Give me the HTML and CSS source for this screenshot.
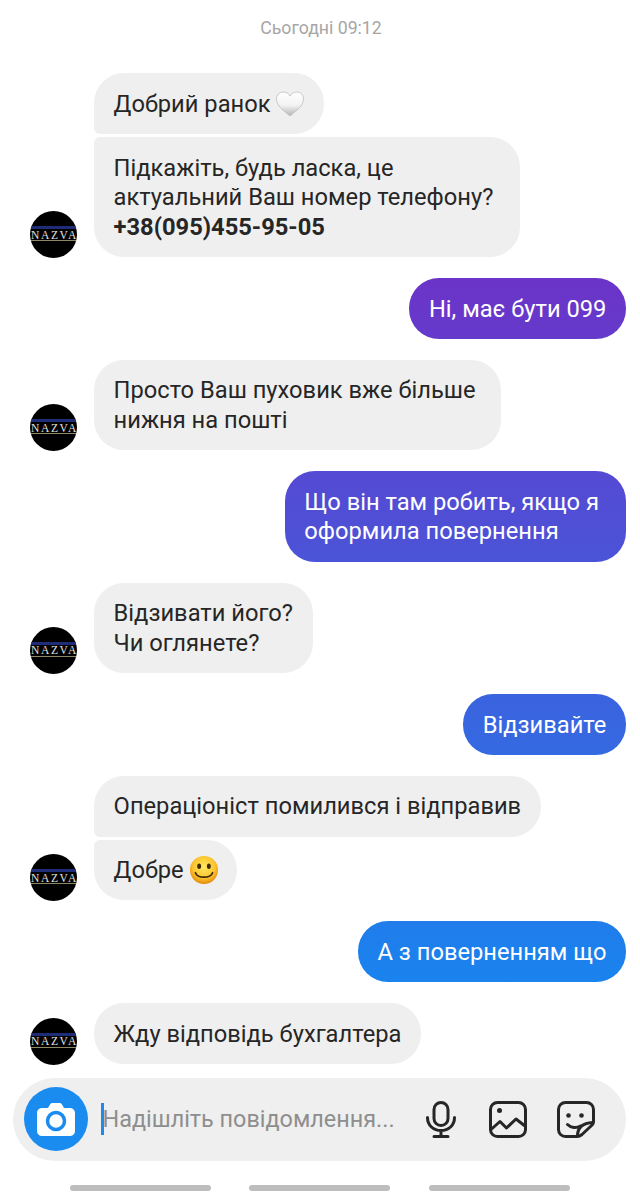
FILE: index.html
```html
<!DOCTYPE html>
<html lang="uk">
<head>
    <meta charset="UTF-8">
    <meta name="viewport" content="width=device-width, initial-scale=1.0">
    <title>Чат</title>
    <link rel="stylesheet" href="styles.css">
</head>
<body>

    <div class="date">Сьогодні 09:12</div>

    <div class="thread">

        <div class="row">
            <div class="avatar"><span class="avatar-name">NAZVA</span></div>
            <div class="group">
                <div class="bubble first">Добрий ранок
                    <svg class="emoji" viewBox="1 2 28 26">
                        <defs>
                            <linearGradient id="heartFill" x1="0" y1="0" x2="0" y2="1">
                                <stop offset="0" stop-color="#ffffff"/>
                                <stop offset="0.55" stop-color="#f3f3f3"/>
                                <stop offset="1" stop-color="#b4b4b4"/>
                            </linearGradient>
                        </defs>
                        <path d="M15 27C9 22 1.500 17 1.500 9.800 1.500 5.500 4.800 3 8.300 3 11 3 13.600 4.400 15 7 16.400 4.400 19 3 21.700 3 25.200 3 28.500 5.500 28.500 9.800 28.500 17 21 22 15 27Z" fill="url(#heartFill)" stroke="#bcbcbc" stroke-width="0.8"/>
                    </svg>
                </div>
                <div class="bubble last pad-wide">Підкажіть, будь ласка, це<br>актуальний Ваш номер телефону?<br><strong>+38(095)455-95-05</strong></div>
            </div>
        </div>

        <div class="bubble sent">Ні, має бути 099</div>

        <div class="row">
            <div class="avatar"><span class="avatar-name">NAZVA</span></div>
            <div class="bubble pad-mid">Просто Ваш пуховик вже більше<br>нижня на пошті</div>
        </div>

        <div class="bubble sent pad-wide">Що він там робить, якщо я<br>оформила повернення</div>

        <div class="row">
            <div class="avatar"><span class="avatar-name">NAZVA</span></div>
            <div class="bubble">Відзивати його?<br>Чи оглянете?</div>
        </div>

        <div class="bubble sent">Відзивайте</div>

        <div class="row">
            <div class="avatar"><span class="avatar-name">NAZVA</span></div>
            <div class="group">
                <div class="bubble first">Операціоніст помилився і відправив</div>
                <div class="bubble last">Добре
                    <svg class="emoji" viewBox="2 2 26 26">
                        <defs>
                            <radialGradient id="faceFill" cx="0.5" cy="0.4" r="0.6">
                                <stop offset="0" stop-color="#ffe760"/>
                                <stop offset="0.65" stop-color="#fcc52f"/>
                                <stop offset="1" stop-color="#e58a0a"/>
                            </radialGradient>
                        </defs>
                        <circle cx="15" cy="15" r="13" fill="url(#faceFill)"/>
                        <ellipse cx="10.500" cy="11.500" rx="1.800" ry="2.600" fill="#3f2a08"/>
                        <ellipse cx="19.500" cy="11.500" rx="1.800" ry="2.600" fill="#3f2a08"/>
                        <path d="M7 17.500C9 23 21 23 23 17.500" fill="none" stroke="#3f2a08" stroke-width="1.600" stroke-linecap="round"/>
                    </svg>
                </div>
            </div>
        </div>

        <div class="bubble sent">А з поверненням що</div>

        <div class="row">
            <div class="avatar"><span class="avatar-name">NAZVA</span></div>
            <div class="bubble">Жду відповідь бухгалтера</div>
        </div>

    </div>

    <div class="composer">
        <div class="camera">
            <svg viewBox="0 0 38 33" width="38" height="33">
                <path d="M5 5H11L13 1.500C13.500 .6 14.200 0 15.400 0H22.600C23.800 0 24.500 .6 25 1.500L27 5H33C35.800 5 38 7.200 38 10V28C38 30.800 35.800 33 33 33H5C2.200 33 0 30.800 0 28V10C0 7.200 2.200 5 5 5Z" fill="#fff"/>
                <circle cx="19" cy="18" r="8.500" fill="none" stroke="#1a8cf0" stroke-width="3.500"/>
            </svg>
        </div>
        <div class="caret"></div>
        <div class="placeholder">Надішліть повідомлення...</div>
        <div class="tools">
            <svg class="tool mic" viewBox="0 0 30 37" width="30" height="37">
                <rect x="8" y="1.500" width="14" height="23" rx="7"/>
                <path d="M1.500 16.500C1.500 24.500 7.500 29.500 15 29.500S28.500 24.500 28.500 16.500M15 29.500V35.500M8 35.500H22"/>
            </svg>
            <svg class="tool" viewBox="0 0 38 37" width="38" height="37">
                <rect x="1.500" y="1.500" width="35" height="34" rx="7"/>
                <path d="M2 28.500L11 20.500 17.500 27 27 18 36 25"/>
                <circle class="dot" cx="10.500" cy="9.500" r="2.500"/>
            </svg>
            <svg class="tool" viewBox="0 0 38 37" width="38" height="37">
                <path d="M36.500 21V8.500C36.500 4.600 33.400 1.500 29.500 1.500H8.500C4.600 1.500 1.500 4.600 1.500 8.500V28.500C1.500 32.400 4.600 35.500 8.500 35.500H20C22 35.500 23.500 34.800 25 33.500L33.500 25.500C35.500 23.800 36.500 23 36.500 21Z"/>
                <path d="M20.500 35C20.500 27 24.500 22 36 21.500M10.500 23.500C14 27 19.500 27.500 23.500 25"/>
                <circle class="dot" cx="11.500" cy="14.500" r="2.300"/>
                <circle class="dot" cx="24.500" cy="14.500" r="2.300"/>
            </svg>
        </div>
    </div>

    <div class="navbar">
        <div class="nav-pill"></div>
        <div class="nav-pill"></div>
        <div class="nav-pill"></div>
    </div>

</body>
</html>
```

FILE: styles.css
```css
body { margin: 0; width: 640px; height: 1200px; overflow: hidden; background-color: #fff; font-family: "Roboto", "Liberation Sans", sans-serif; color: #262626; }

.date { padding-top: 16px; height: 24px; line-height: 24px; margin-bottom: 33.3px; margin-left: 2px; text-align: center; font-size: 17.7px; color: #a6a6a6; }

.thread { display: flex; flex-direction: column; gap: 21px; padding: 0 14px 0 30px; }
.row { display: flex; align-items: flex-end; gap: 17px; }
.group { display: flex; flex-direction: column; align-items: flex-start; gap: 3px; }

.bubble { padding: 16.6px 19.6px 14.6px; border-radius: 30px; background-color: #efefef; font-size: 23.7px; line-height: 29.6px; white-space: nowrap; }
.bubble.first { border-bottom-left-radius: 6px; }
.bubble.last { border-top-left-radius: 6px; }
.bubble.pad-wide { padding-right: 27px; }
.bubble.pad-mid { padding-right: 25px; }
.bubble strong { font-weight: 700; }
.bubble.sent { align-self: flex-end; color: #fff; background: linear-gradient(180deg, rgb(140, 20, 185), rgb(0, 156, 250)) fixed; }

.emoji { width: 28px; height: 28px; margin: -6px 0; vertical-align: baseline; }

.avatar { flex: none; position: relative; display: flex; align-items: center; justify-content: center; width: 47px; height: 47px; margin-bottom: -1px; border-radius: 50%; overflow: hidden; background-color: #000; }
.avatar::before { content: ""; position: absolute; left: 0; right: 0; top: 15px; height: 3px; background-color: #1f2d78; }
.avatar::after { content: ""; position: absolute; left: 0; right: 0; top: 29px; height: 1px; background-color: #8d8a63; }
.avatar-name { font-family: "Liberation Serif", serif; font-size: 11.5px; letter-spacing: 1.6px; color: #e0e0e0; margin-right: -2px; white-space: nowrap; }

.composer { display: flex; align-items: center; height: 83px; margin: 13.9px 14px 0 13px; padding-left: 10.5px; border-radius: 42px; background-color: #efefef; }
.camera { flex: none; display: flex; align-items: center; justify-content: center; width: 64px; height: 64px; border-radius: 50%; background-color: #1a8cf0; }
.caret { flex: none; width: 3px; height: 32px; margin-left: 13px; background-color: #1a8cf0; }
.placeholder { width: 296px; margin-left: -1px; font-size: 23.4px; color: #8e8e8e; white-space: nowrap; }
.tools { display: flex; align-items: center; gap: 30px; margin-left: 27.5px; }
.tool { display: block; fill: none; stroke: #262626; stroke-width: 3; stroke-linecap: round; stroke-linejoin: round; }
.tool .dot { fill: #262626; stroke: none; }
.mic { margin-right: 3px; }

.navbar { display: flex; gap: 38.4px; margin: 24px 0 0 70px; }
.nav-pill { width: 141px; height: 6px; border-radius: 3px; background-color: #bdbdbd; }
```
